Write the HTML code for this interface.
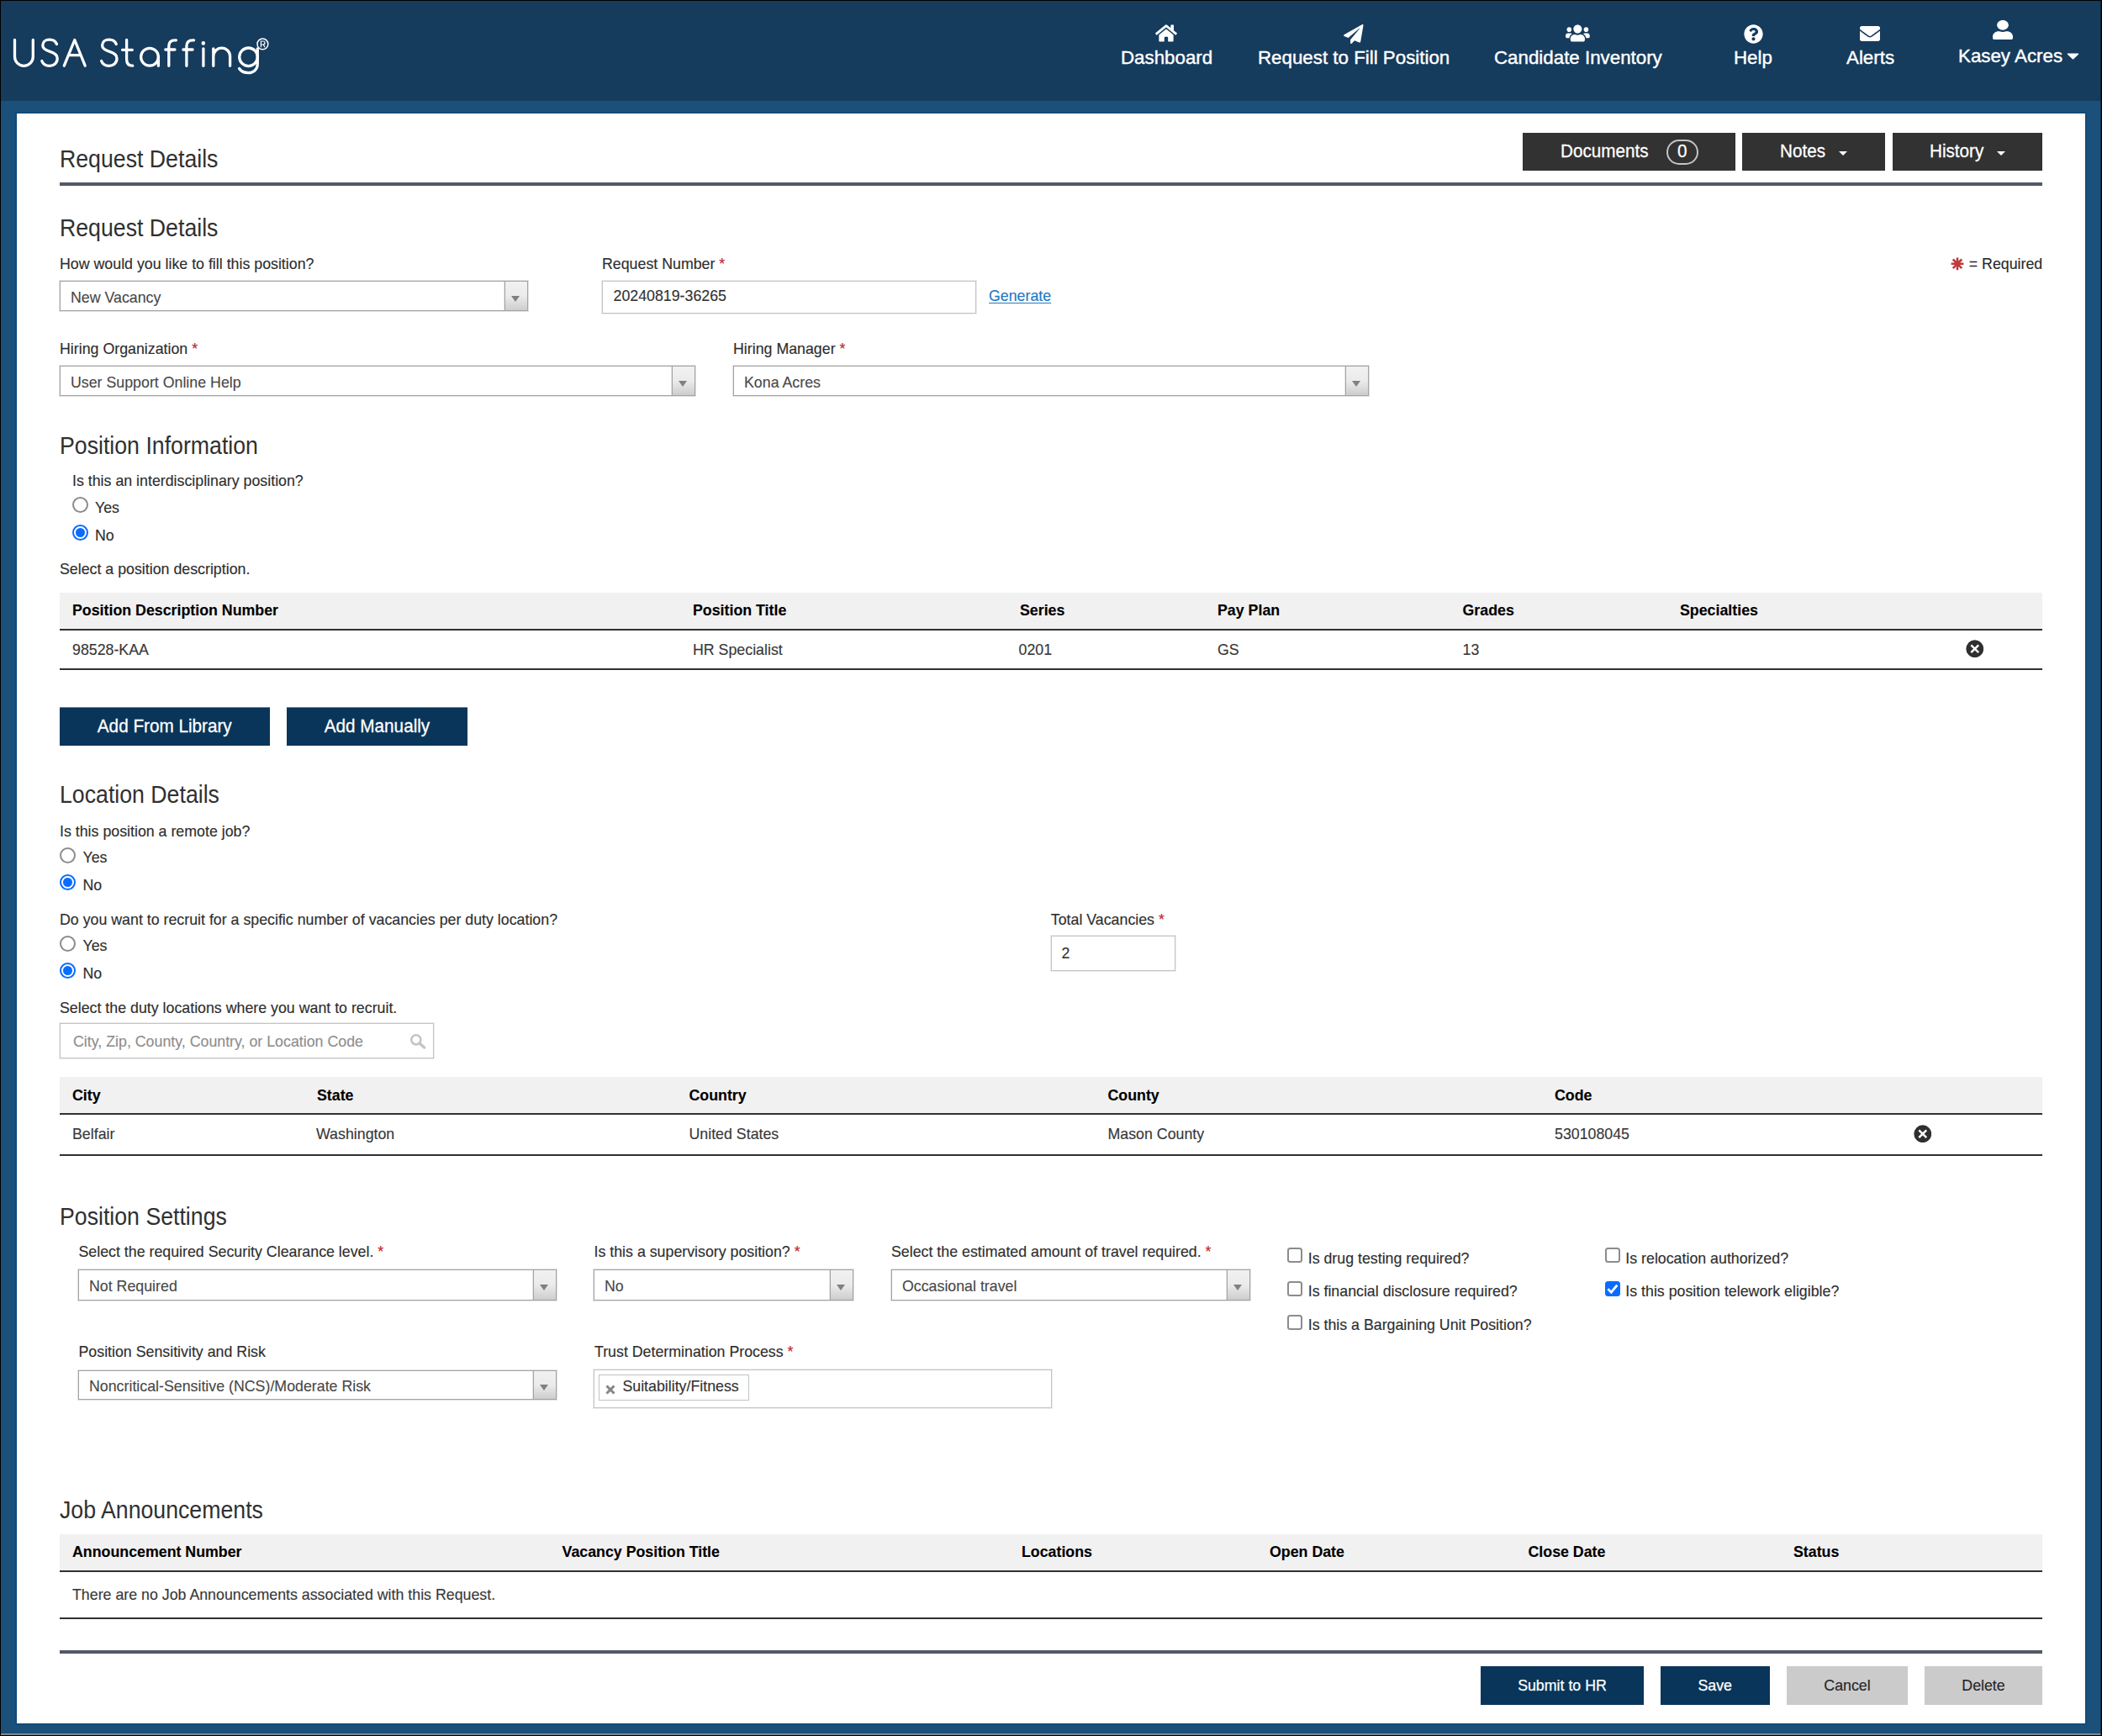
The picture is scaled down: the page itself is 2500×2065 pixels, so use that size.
<!DOCTYPE html>
<html><head><meta charset="utf-8"><title>Request Details</title>
<style>
html,body{margin:0;padding:0}
body{width:2500px;height:2065px;position:relative;overflow:hidden;background:#1b507a;font-family:"Liberation Sans",sans-serif}
.b{position:absolute;box-sizing:border-box}
.t{position:absolute;white-space:nowrap;line-height:1;letter-spacing:0;-webkit-text-stroke:0.14px currentColor}
.sel{position:absolute;box-sizing:border-box;border:1px solid #a3a3a3;background:#fff;box-shadow:0 0 0 1px rgba(150,150,150,.28)}
.selt{position:absolute;left:12px;top:50%;margin-top:-6.4px;font-size:17.8px;line-height:1;color:#484848;white-space:nowrap;-webkit-text-stroke:0.12px #484848}
.arr{position:absolute;right:0;top:0;bottom:0;width:26px;border-left:1px solid #a3a3a3;box-shadow:-1px 0 0 rgba(150,150,150,.25);background:linear-gradient(#f1f1f1 0%,#ebebeb 50%,#cdcdcd 100%)}
.arr i{position:absolute;left:50%;top:50%;margin-left:-6.5px;margin-top:-0.2px;width:0;height:0;border-left:5.2px solid transparent;border-right:5.2px solid transparent;border-top:7.4px solid #808080}
.inp{position:absolute;box-sizing:border-box;border:1px solid #c4c4c4;background:#fff;box-shadow:0 0 0 1px rgba(200,200,200,.35)}
.rad{position:absolute;box-sizing:border-box;width:19px;height:19px;border-radius:50%;border:2px solid #8c8c8c;background:#fff}
.rad.on{border:2.2px solid #0a6cff}
.rad.on:after{content:"";position:absolute;left:50%;top:50%;width:11px;height:11px;margin:-5.5px 0 0 -5.5px;border-radius:50%;background:#0a6cff}
.chk{position:absolute;box-sizing:border-box;width:18px;height:18px;border-radius:3.5px;border:2px solid #8c8c8c;background:#fff}
.chk.on{border:0;background:#0a6cff}
.chk.on svg{position:absolute;left:0;top:0}
.btn{position:absolute;box-sizing:border-box;text-align:center;white-space:nowrap}
</style></head><body>

<div class="b" style="left:0.00px;top:0.00px;width:2500.00px;height:120.00px;background:#153b5d"></div>
<div class="b" style="left:20.00px;top:135.00px;width:2460.00px;height:1915.00px;background:#fff;box-shadow:0 0 0 1.4px #0e4777"></div>
<div class="b" style="left:0.00px;top:2062.00px;width:2500.00px;height:2.00px;background:linear-gradient(#8da0b3,#6f6f6f)"></div>
<div class="b" style="left:0.00px;top:0.00px;width:2500.00px;height:1.00px;background:#000"></div>
<div class="b" style="left:0.00px;top:0.00px;width:1.00px;height:2065.00px;background:#000"></div>
<div class="b" style="left:2499.00px;top:0.00px;width:1.00px;height:2065.00px;background:#000"></div>
<div class="b" style="left:2498.00px;top:0.00px;width:1.00px;height:2065.00px;background:rgba(0,0,0,.45)"></div>
<div class="b" style="left:0.00px;top:2064.00px;width:2500.00px;height:1.00px;background:#000"></div>
<svg class="b" style="left:0;top:0" width="340" height="100" viewBox="0 0 340 100" fill="none" stroke="#fff" stroke-width="3.3" stroke-linecap="round" stroke-linejoin="round">
<path d="M17.5,47.5 V67.4 A10.9,10.9 0 0 0 39.3,67.4 V47.5"/>
<path d="M67.5,52.5 C66,49 63,47.2 59,47.2 C54,47.2 50.8,50 50.8,54 C50.8,58.5 55,60 59.5,61.3 C64.5,62.8 68.2,64.8 68.2,69.5 C68.2,75 64,78.3 59,78.3 C54.5,78.3 51,76 49.8,72.5"/>
<path d="M76.3,78.2 L88.8,47.5 L101.2,78.2 M82,65.6 H95.5"/>
<path transform="translate(70.8,0)" d="M67.5,52.5 C66,49 63,47.2 59,47.2 C54,47.2 50.8,50 50.8,54 C50.8,58.5 55,60 59.5,61.3 C64.5,62.8 68.2,64.8 68.2,69.5 C68.2,75 64,78.3 59,78.3 C54.5,78.3 51,76 49.8,72.5"/>
<path d="M150.6,47.5 V70.5 Q150.6,78.2 157.8,78.2 M145.5,59.3 H157.3"/>
<circle cx="178" cy="67.8" r="10.4"/><path d="M188.4,67.8 V78.3"/>
<path d="M209.5,47.8 H208 Q200.8,47.8 200.8,55 V78.3 M196.8,59 H208"/>
<path transform="translate(21.1,0)" d="M209.5,47.8 H208 Q200.8,47.8 200.8,55 V78.3 M196.8,59 H208"/>
<path d="M241.9,57.8 V78.3"/><circle cx="241.8" cy="51.4" r="1.1" fill="#fff" stroke-width="2.4"/>
<path d="M253.8,57.8 V78.3 M253.8,67 A9.9,9.9 0 0 1 273.6,67 V78.3"/>
<circle cx="295.5" cy="67.8" r="10.8"/><path d="M306.3,57.8 V76 C306.3,83 301,86.6 295.5,86.6 C290.5,86.6 286.5,84.5 284.5,81.5"/>
<circle cx="312.4" cy="52.4" r="6.4" stroke-width="1.5"/>
<path d="M310.4,55.8 V49 H313 A2,2 0 0 1 313,53 H310.4 M313,53 L315,55.8" stroke-width="1.2"/>
</svg>
<div class="t " style="left:1333.00px;top:57.55px;font-size:22.5px;color:#fff;-webkit-text-stroke:0.4px #fff;transform:scaleX(0.992);transform-origin:0 0;">Dashboard</div>
<div class="t " style="left:1495.60px;top:57.55px;font-size:22.5px;color:#fff;-webkit-text-stroke:0.4px #fff;transform:scaleX(0.992);transform-origin:0 0;">Request to Fill Position</div>
<div class="t " style="left:1777.00px;top:57.55px;font-size:22.5px;color:#fff;-webkit-text-stroke:0.4px #fff;transform:scaleX(0.992);transform-origin:0 0;">Candidate Inventory</div>
<div class="t " style="left:2062.40px;top:57.55px;font-size:22.5px;color:#fff;-webkit-text-stroke:0.4px #fff;transform:scaleX(0.992);transform-origin:0 0;">Help</div>
<div class="t " style="left:2196.00px;top:57.55px;font-size:22.5px;color:#fff;-webkit-text-stroke:0.4px #fff;transform:scaleX(0.992);transform-origin:0 0;">Alerts</div>
<div class="t " style="left:2329.00px;top:56.45px;font-size:22.5px;color:#fff;-webkit-text-stroke:0.4px #fff;transform:scaleX(0.992);transform-origin:0 0;">Kasey Acres</div>
<svg class="b" style="left:1374px;top:28.2px" width="26" height="23" viewBox="0 0 576 512" preserveAspectRatio="xMidYMid meet"><path fill="#fff" d="M280.37 148.26L96 300.11V464a16 16 0 0 0 16 16l112.06-.29a16 16 0 0 0 15.92-16V368a16 16 0 0 1 16-16h64a16 16 0 0 1 16 16v95.64a16 16 0 0 0 16 16.05L464 480a16 16 0 0 0 16-16V300L295.67 148.26a12.19 12.19 0 0 0-15.3 0zM571.6 251.47L488 182.56V44.05a12 12 0 0 0-12-12h-56a12 12 0 0 0-12 12v72.61L318.47 43a48 48 0 0 0-61 0L4.34 251.47a12 12 0 0 0-1.6 16.9l25.5 31A12 12 0 0 0 45.15 301l235.22-193.74a12.19 12.19 0 0 1 15.3 0L530.9 301a12 12 0 0 0 16.9-1.6l25.5-31a12 12 0 0 0-1.7-16.93z"/></svg>
<svg class="b" style="left:1598px;top:28.6px" width="23.5" height="23" viewBox="0 0 512 512" preserveAspectRatio="none"><path fill="#fff" d="M476 3.2L12.5 270.6c-18.1 10.4-15.8 35.6 2.2 43.2L121 358.4l287.3-253.2c5.5-4.9 13.3 2.6 8.6 8.3L176 407v80.5c0 23.6 28.5 32.9 42.5 15.8L282 426l124.6 52.2c14.2 6 30.4-2.9 33-18.2l72-432C515 7.8 493.3-6.8 476 3.2z"/></svg>
<svg class="b" style="left:1862px;top:28.2px" width="28.75" height="23" viewBox="0 0 640 512" preserveAspectRatio="xMidYMid meet"><path fill="#fff" d="M96 224c35.3 0 64-28.7 64-64s-28.7-64-64-64-64 28.7-64 64 28.7 64 64 64zm448 0c35.3 0 64-28.7 64-64s-28.7-64-64-64-64 28.7-64 64 28.7 64 64 64zm32 32h-64c-17.6 0-33.500 7.100-45.100 18.600 40.300 22.100 68.900 62 75.100 109.400h66c17.700 0 32-14.300 32-32v-32c0-35.300-28.700-64-64-64zm-256 0c61.900 0 112-50.100 112-112S381.900 32 320 32 208 82.100 208 144s50.100 112 112 112zm76.800 32h-8.300c-20.800 10-43.900 16-68.500 16s-47.600-6-68.500-16h-8.300C179.600 288 128 339.600 128 403.200V432c0 26.500 21.500 48 48 48h288c26.500 0 48-21.500 48-48v-28.800c0-63.600-51.600-115.200-115.200-115.200zm-223.700-13.400C161.500 263.100 145.600 256 128 256H64c-35.300 0-64 28.700-64 64v32c0 17.700 14.300 32 32 32h65.900c6.300-47.400 34.900-87.300 75.200-109.400z"/></svg>
<svg class="b" style="left:2073.5px;top:28.6px" width="23" height="23" viewBox="0 0 512 512" preserveAspectRatio="xMidYMid meet"><path fill="#fff" d="M504 256c0 136.997-111.043 248-248 248S8 392.997 8 256C8 119.083 119.043 8 256 8s248 111.083 248 248zM262.655 90c-54.497 0-89.255 22.957-116.549 63.758-3.536 5.286-2.353 12.415 2.715 16.258l34.699 26.31c5.205 3.947 12.621 3.008 16.665-2.122 17.864-22.658 30.113-35.797 57.303-35.797 20.429 0 45.698 13.148 45.698 32.958 0 14.976-12.363 22.667-32.534 33.976C247.128 238.528 216 254.941 216 296v4c0 6.627 5.373 12 12 12h56c6.627 0 12-5.373 12-12v-1.333c0-28.462 83.186-29.647 83.186-106.667 0-58.002-60.165-102-116.531-102zM256 338c-25.365 0-46 20.635-46 46 0 25.364 20.635 46 46 46s46-20.636 46-46c0-25.365-20.635-46-46-46z"/></svg>
<svg class="b" style="left:2212.4px;top:28px" width="24" height="24" viewBox="0 0 512 512" preserveAspectRatio="xMidYMid meet"><path fill="#fff" d="M502.3 190.8c3.9-3.1 9.7-.2 9.7 4.7V400c0 26.5-21.5 48-48 48H48c-26.5 0-48-21.5-48-48V195.6c0-5 5.7-7.800 9.700-4.700 22.400 17.400 52.100 39.500 154.100 113.600 21.100 15.400 56.700 47.800 92.200 47.600 35.700.3 72-32.800 92.300-47.600 102-74.100 131.600-96.300 154-113.700zM256 320c23.200.4 56.600-29.200 73.400-41.400 132.700-96.300 142.800-104.700 173.400-128.700 5.800-4.500 9.200-11.500 9.200-18.900v-19c0-26.500-21.500-48-48-48H48C21.500 64 0 85.500 0 112v19c0 7.400 3.400 14.300 9.200 18.900 30.600 23.900 40.700 32.400 173.400 128.700 16.800 12.200 50.200 41.800 73.400 41.400z"/></svg>
<svg class="b" style="left:2370px;top:23.6px" width="24" height="23.4" viewBox="0 0 448 512" preserveAspectRatio="none"><path fill="#fff" d="M224 256c70.7 0 128-57.3 128-128S294.7 0 224 0 96 57.3 96 128s57.3 128 128 128zm89.600 32h-16.700c-22.200 10.200-46.900 16-72.900 16s-50.600-5.800-72.900-16h-16.700C60.200 288 0 348.200 0 422.400V464c0 26.500 21.500 48 48 48h352c26.500 0 48-21.500 48-48v-41.600c0-74.200-60.200-134.400-134.400-134.400z"/></svg>
<svg class="b" style="left:2458.4px;top:63.4px" width="15" height="8" viewBox="0 0 15 8"><path d="M1.2,0.6 H13.8 Q14.6,0.9 14,1.7 L8.2,7.3 Q7.5,7.8 6.8,7.3 L1,1.7 Q0.4,0.9 1.2,0.6 Z" fill="#fff"/></svg>
<div class="t" style="left:71px;top:174.82px;font-size:28.8px;color:#303030;-webkit-text-stroke:0;transform:scaleX(0.927);transform-origin:0 0">Request Details</div>
<div class="b" style="left:71.00px;top:217.00px;width:2358.00px;height:4.00px;background:#525966"></div>
<div class="btn" style="left:1811px;top:158px;width:253px;height:45px;background:#323232"></div>
<div class="btn" style="left:2072px;top:158px;width:170px;height:45px;background:#323232"></div>
<div class="btn" style="left:2251px;top:158px;width:178px;height:45px;background:#323232"></div>
<div class="t " style="left:1856.00px;top:169.25px;font-size:22.149px;color:#fff;-webkit-text-stroke:0.3px #fff;transform:scaleX(0.9346);transform-origin:0 0;">Documents</div>
<div class="b" style="left:1981.50px;top:165.50px;width:38.00px;height:30.50px;border:2px solid #c4c4c4;border-radius:15.5px"></div>
<div class="t " style="left:1994.60px;top:169.25px;font-size:22.149px;color:#fff;-webkit-text-stroke:0.3px #fff;transform:scaleX(0.9346);transform-origin:0 0;">0</div>
<div class="t " style="left:2117.30px;top:169.25px;font-size:22.149px;color:#fff;-webkit-text-stroke:0.3px #fff;transform:scaleX(0.9346);transform-origin:0 0;">Notes</div>
<div class="t " style="left:2295.00px;top:169.25px;font-size:22.149px;color:#fff;-webkit-text-stroke:0.3px #fff;transform:scaleX(0.9346);transform-origin:0 0;">History</div>
<div class="b" style="left:2186.7px;top:180px;width:0;height:0;border-left:5.0px solid transparent;border-right:5.0px solid transparent;border-top:5px solid #fff"></div>
<div class="b" style="left:2375px;top:180px;width:0;height:0;border-left:5.0px solid transparent;border-right:5.0px solid transparent;border-top:5px solid #fff"></div>
<div class="t" style="left:71px;top:256.82px;font-size:28.8px;color:#303030;-webkit-text-stroke:0;transform:scaleX(0.927);transform-origin:0 0">Request Details</div>
<div class="t " style="left:71.00px;top:305.53px;font-size:17.8px;color:#2e2e2e;">How would you like to fill this position?</div>
<div class="t " style="left:716.00px;top:305.53px;font-size:17.8px;color:#2e2e2e;">Request Number <span style="color:#c0262c">*</span></div>
<div class="sel" style="left:71.00px;top:334.00px;width:557.00px;height:36.00px"><span class="selt">New Vacancy</span><span class="arr"><i></i></span></div>
<div class="inp" style="left:716px;top:333.5px;width:444.5px;height:39px"></div>
<div class="t " style="left:729.50px;top:344.23px;font-size:17.8px;color:#333;">20240819-36265</div>
<div class="t " style="left:1176.00px;top:343.53px;font-size:17.8px;color:#2279c3;text-decoration:underline;text-decoration-thickness:1.3px;text-underline-offset:2px">Generate</div>
<svg class="b" style="left:2320px;top:306px" width="16" height="15.6" viewBox="-8 -8 16 16"><g stroke="#bf3a3c" stroke-width="2.7" stroke-linecap="butt"><path d="M0,-7.6V7.6M-7.6,0H7.6M-5.4,-5.4L5.4,5.4M-5.4,5.4L5.4,-5.4"/></g></svg>
<div class="t " style="right:70.80px;top:305.53px;font-size:17.8px;color:#2a2a2a;">= Required</div>
<div class="t " style="left:71.00px;top:406.53px;font-size:17.8px;color:#2e2e2e;">Hiring Organization <span style="color:#c0262c">*</span></div>
<div class="t " style="left:872.00px;top:406.53px;font-size:17.8px;color:#2e2e2e;">Hiring Manager <span style="color:#c0262c">*</span></div>
<div class="sel" style="left:71.00px;top:435.00px;width:756.00px;height:36.00px"><span class="selt">User Support Online Help</span><span class="arr"><i></i></span></div>
<div class="sel" style="left:872.00px;top:435.00px;width:756.00px;height:36.00px"><span class="selt">Kona Acres</span><span class="arr"><i></i></span></div>
<div class="t" style="left:71px;top:515.62px;font-size:28.8px;color:#303030;-webkit-text-stroke:0;transform:scaleX(0.927);transform-origin:0 0">Position Information</div>
<div class="t " style="left:86.00px;top:563.53px;font-size:17.8px;color:#2e2e2e;">Is this an interdisciplinary position?</div>
<div class="rad" style="left:85.50px;top:590.90px"></div>
<div class="t " style="left:113.00px;top:595.53px;font-size:17.8px;color:#2e2e2e;">Yes</div>
<div class="rad on" style="left:85.50px;top:624.20px"></div>
<div class="t " style="left:113.00px;top:628.53px;font-size:17.8px;color:#2e2e2e;">No</div>
<div class="t " style="left:71.00px;top:668.53px;font-size:17.8px;color:#2e2e2e;">Select a position description.</div>
<div class="b" style="left:71.00px;top:705.00px;width:2358.00px;height:44.00px;background:#f1f1f1"></div>
<div class="b" style="left:71.00px;top:748.00px;width:2358.00px;height:2.00px;background:#303030"></div>
<div class="b" style="left:71.00px;top:795.00px;width:2358.00px;height:2.00px;background:#303030"></div>
<div class="t " style="left:86.00px;top:718.43px;font-size:17.8px;color:#000;font-weight:bold;-webkit-text-stroke:0.12px #000;">Position Description Number</div>
<div class="t " style="left:824.00px;top:718.43px;font-size:17.8px;color:#000;font-weight:bold;-webkit-text-stroke:0.12px #000;">Position Title</div>
<div class="t " style="left:1213.00px;top:718.43px;font-size:17.8px;color:#000;font-weight:bold;-webkit-text-stroke:0.12px #000;">Series</div>
<div class="t " style="left:1448.00px;top:718.43px;font-size:17.8px;color:#000;font-weight:bold;-webkit-text-stroke:0.12px #000;">Pay Plan</div>
<div class="t " style="left:1739.50px;top:718.43px;font-size:17.8px;color:#000;font-weight:bold;-webkit-text-stroke:0.12px #000;">Grades</div>
<div class="t " style="left:1998.00px;top:718.43px;font-size:17.8px;color:#000;font-weight:bold;-webkit-text-stroke:0.12px #000;">Specialties</div>
<div class="t " style="left:86.00px;top:764.53px;font-size:17.8px;color:#383838;">98528-KAA</div>
<div class="t " style="left:824.00px;top:764.53px;font-size:17.8px;color:#383838;">HR Specialist</div>
<div class="t " style="left:1211.50px;top:764.53px;font-size:17.8px;color:#383838;">0201</div>
<div class="t " style="left:1448.00px;top:764.53px;font-size:17.8px;color:#383838;">GS</div>
<div class="t " style="left:1739.50px;top:764.53px;font-size:17.8px;color:#383838;">13</div>
<svg class="b" style="left:2337.65px;top:760.55px" width="21.5" height="21.5" viewBox="0 0 512 512"><circle cx="256" cy="256" r="248" fill="#2f2f2f"/><path d="M150 150 L362 362 M362 150 L150 362" stroke="#fff" stroke-width="58" stroke-linecap="butt"/></svg>
<div class="btn" style="left:71px;top:842px;width:249.5px;height:45px;background:#09355a;box-shadow:0 -1px 0 rgba(9,53,90,.6);"><div style="position:absolute;left:0;right:0;top:11.36px;line-height:1;font-size:22.25px;color:#fff;transform:scaleX(0.9302);-webkit-text-stroke:0.3px #fff">Add From Library</div></div>
<div class="btn" style="left:340.5px;top:842px;width:215.0px;height:45px;background:#09355a;box-shadow:0 -1px 0 rgba(9,53,90,.6);"><div style="position:absolute;left:0;right:0;top:11.36px;line-height:1;font-size:22.25px;color:#fff;transform:scaleX(0.9302);-webkit-text-stroke:0.3px #fff">Add Manually</div></div>
<div class="t" style="left:71px;top:931.32px;font-size:28.8px;color:#303030;-webkit-text-stroke:0;transform:scaleX(0.927);transform-origin:0 0">Location Details</div>
<div class="t " style="left:71.00px;top:980.53px;font-size:17.8px;color:#2e2e2e;">Is this position a remote job?</div>
<div class="rad" style="left:71.00px;top:1007.90px"></div>
<div class="t " style="left:98.50px;top:1012.03px;font-size:17.8px;color:#2e2e2e;">Yes</div>
<div class="rad on" style="left:71.00px;top:1040.40px"></div>
<div class="t " style="left:98.50px;top:1044.73px;font-size:17.8px;color:#2e2e2e;">No</div>
<div class="t " style="left:71.00px;top:1085.53px;font-size:17.8px;color:#2e2e2e;">Do you want to recruit for a specific number of vacancies per duty location?</div>
<div class="rad" style="left:71.00px;top:1112.90px"></div>
<div class="t " style="left:98.50px;top:1117.03px;font-size:17.8px;color:#2e2e2e;">Yes</div>
<div class="rad on" style="left:71.00px;top:1145.40px"></div>
<div class="t " style="left:98.50px;top:1149.73px;font-size:17.8px;color:#2e2e2e;">No</div>
<div class="t " style="left:1249.80px;top:1085.53px;font-size:17.8px;color:#2e2e2e;">Total Vacancies <span style="color:#c0262c">*</span></div>
<div class="inp" style="left:1250px;top:1113px;width:148px;height:42px"></div>
<div class="t " style="left:1262.60px;top:1125.53px;font-size:17.8px;color:#333;">2</div>
<div class="t " style="left:71.00px;top:1190.53px;font-size:17.8px;color:#2e2e2e;">Select the duty locations where you want to recruit.</div>
<div class="inp" style="left:71px;top:1217px;width:445px;height:41.5px"></div>
<div class="t " style="left:87.00px;top:1230.53px;font-size:17.8px;color:#8e8e8e;">City, Zip, County, Country, or Location Code</div>
<svg class="b" style="left:487px;top:1229px" width="20" height="19" viewBox="0 0 20 19"><circle cx="7.8" cy="7.8" r="5.6" fill="none" stroke="#c4c4c4" stroke-width="2.6"/><path d="M12,12 L17.6,17" stroke="#c4c4c4" stroke-width="3.4" stroke-linecap="round"/></svg>
<div class="b" style="left:71.00px;top:1281.00px;width:2358.00px;height:44.00px;background:#f1f1f1"></div>
<div class="b" style="left:71.00px;top:1324.00px;width:2358.00px;height:2.00px;background:#303030"></div>
<div class="b" style="left:71.00px;top:1373.00px;width:2358.00px;height:2.00px;background:#303030"></div>
<div class="t " style="left:86.00px;top:1294.53px;font-size:17.8px;color:#000;font-weight:bold;-webkit-text-stroke:0.12px #000;">City</div>
<div class="t " style="left:377.00px;top:1294.53px;font-size:17.8px;color:#000;font-weight:bold;-webkit-text-stroke:0.12px #000;">State</div>
<div class="t " style="left:819.50px;top:1294.53px;font-size:17.8px;color:#000;font-weight:bold;-webkit-text-stroke:0.12px #000;">Country</div>
<div class="t " style="left:1317.50px;top:1294.53px;font-size:17.8px;color:#000;font-weight:bold;-webkit-text-stroke:0.12px #000;">County</div>
<div class="t " style="left:1849.00px;top:1294.53px;font-size:17.8px;color:#000;font-weight:bold;-webkit-text-stroke:0.12px #000;">Code</div>
<div class="t " style="left:86.00px;top:1340.53px;font-size:17.8px;color:#383838;">Belfair</div>
<div class="t " style="left:376.00px;top:1340.53px;font-size:17.8px;color:#383838;">Washington</div>
<div class="t " style="left:819.50px;top:1340.53px;font-size:17.8px;color:#383838;">United States</div>
<div class="t " style="left:1317.50px;top:1340.53px;font-size:17.8px;color:#383838;">Mason County</div>
<div class="t " style="left:1849.00px;top:1340.53px;font-size:17.8px;color:#383838;">530108045</div>
<svg class="b" style="left:2275.75px;top:1337.75px" width="21.5" height="21.5" viewBox="0 0 512 512"><circle cx="256" cy="256" r="248" fill="#2f2f2f"/><path d="M150 150 L362 362 M362 150 L150 362" stroke="#fff" stroke-width="58" stroke-linecap="butt"/></svg>
<div class="t" style="left:71px;top:1433.12px;font-size:28.8px;color:#303030;-webkit-text-stroke:0;transform:scaleX(0.927);transform-origin:0 0">Position Settings</div>
<div class="t " style="left:93.50px;top:1480.53px;font-size:17.8px;color:#2e2e2e;">Select the required Security Clearance level. <span style="color:#c0262c">*</span></div>
<div class="t " style="left:706.50px;top:1480.53px;font-size:17.8px;color:#2e2e2e;">Is this a supervisory position? <span style="color:#c0262c">*</span></div>
<div class="t " style="left:1060.00px;top:1480.53px;font-size:17.8px;color:#2e2e2e;">Select the estimated amount of travel required. <span style="color:#c0262c">*</span></div>
<div class="sel" style="left:93.00px;top:1510.00px;width:569.00px;height:37.00px"><span class="selt">Not Required</span><span class="arr"><i></i></span></div>
<div class="sel" style="left:706.00px;top:1510.00px;width:309.00px;height:37.00px"><span class="selt">No</span><span class="arr"><i></i></span></div>
<div class="sel" style="left:1060.00px;top:1510.00px;width:427.00px;height:37.00px"><span class="selt">Occasional travel</span><span class="arr"><i></i></span></div>
<div class="t " style="left:93.50px;top:1599.83px;font-size:17.8px;color:#2e2e2e;">Position Sensitivity and Risk</div>
<div class="t " style="left:707.00px;top:1599.83px;font-size:17.8px;color:#2e2e2e;">Trust Determination Process <span style="color:#c0262c">*</span></div>
<div class="sel" style="left:93.00px;top:1630.00px;width:569.00px;height:35.00px"><span class="selt">Noncritical-Sensitive (NCS)/Moderate Risk</span><span class="arr"><i></i></span></div>
<div class="inp" style="left:706px;top:1629px;width:545px;height:46px"></div>
<div class="inp" style="left:712px;top:1635px;width:179px;height:31px;border-color:#c2c2c2;box-shadow:none"></div>
<svg class="b" style="left:719.5px;top:1646.7px" width="12" height="12" viewBox="0 0 12 12"><path d="M1.5,1.5 L10.5,10.5 M10.5,1.5 L1.5,10.5" stroke="#858585" stroke-width="3"/></svg>
<div class="t " style="left:740.40px;top:1640.73px;font-size:17.8px;color:#333;">Suitability/Fitness</div>
<div class="chk" style="left:1531.00px;top:1484.00px"></div>
<div class="t " style="left:1555.70px;top:1488.53px;font-size:17.8px;color:#2e2e2e;">Is drug testing required?</div>
<div class="chk" style="left:1531.00px;top:1524.00px"></div>
<div class="t " style="left:1555.70px;top:1528.03px;font-size:17.8px;color:#2e2e2e;">Is financial disclosure required?</div>
<div class="chk" style="left:1531.00px;top:1563.50px"></div>
<div class="t " style="left:1555.70px;top:1567.53px;font-size:17.8px;color:#2e2e2e;">Is this a Bargaining Unit Position?</div>
<div class="chk" style="left:1909.00px;top:1484.00px"></div>
<div class="t " style="left:1933.30px;top:1488.53px;font-size:17.8px;color:#2e2e2e;">Is relocation authorized?</div>
<div class="chk on" style="left:1909.00px;top:1524.00px"><svg viewBox="0 0 18 18" width="18" height="18"><path d="M3.4 9.3 L7.3 13.2 L14.4 4.6" fill="none" stroke="#fff" stroke-width="2.8" stroke-linecap="butt" stroke-linejoin="miter"/></svg></div>
<div class="t " style="left:1933.30px;top:1528.03px;font-size:17.8px;color:#2e2e2e;">Is this position telework eligible?</div>
<div class="t" style="left:71px;top:1781.62px;font-size:28.8px;color:#303030;-webkit-text-stroke:0;transform:scaleX(0.927);transform-origin:0 0">Job Announcements</div>
<div class="b" style="left:71.00px;top:1825.00px;width:2358.00px;height:44.00px;background:#f1f1f1"></div>
<div class="b" style="left:71.00px;top:1868.00px;width:2358.00px;height:2.00px;background:#303030"></div>
<div class="b" style="left:71.00px;top:1923.60px;width:2358.00px;height:2.00px;background:#303030"></div>
<div class="t " style="left:86.00px;top:1838.13px;font-size:17.8px;color:#000;font-weight:bold;-webkit-text-stroke:0.12px #000;">Announcement Number</div>
<div class="t " style="left:668.50px;top:1838.13px;font-size:17.8px;color:#000;font-weight:bold;-webkit-text-stroke:0.12px #000;">Vacancy Position Title</div>
<div class="t " style="left:1215.00px;top:1838.13px;font-size:17.8px;color:#000;font-weight:bold;-webkit-text-stroke:0.12px #000;">Locations</div>
<div class="t " style="left:1510.00px;top:1838.13px;font-size:17.8px;color:#000;font-weight:bold;-webkit-text-stroke:0.12px #000;">Open Date</div>
<div class="t " style="left:1817.50px;top:1838.13px;font-size:17.8px;color:#000;font-weight:bold;-webkit-text-stroke:0.12px #000;">Close Date</div>
<div class="t " style="left:2133.00px;top:1838.13px;font-size:17.8px;color:#000;font-weight:bold;-webkit-text-stroke:0.12px #000;">Status</div>
<div class="t " style="left:86.00px;top:1889.13px;font-size:17.8px;color:#383838;">There are no Job Announcements associated with this Request.</div>
<div class="b" style="left:71.00px;top:1963.00px;width:2358.00px;height:4.00px;background:#525966"></div>
<div class="btn" style="left:1761px;top:1982px;width:194px;height:46px;background:#09355a;"><div style="position:absolute;left:0;right:0;top:14.93px;line-height:1;font-size:17.80px;color:#fff;transform:scaleX(1.0000);-webkit-text-stroke:0.25px #fff">Submit to HR</div></div>
<div class="btn" style="left:1975px;top:1982px;width:129.5px;height:46px;background:#09355a;"><div style="position:absolute;left:0;right:0;top:14.93px;line-height:1;font-size:17.80px;color:#fff;transform:scaleX(1.0000);-webkit-text-stroke:0.25px #fff">Save</div></div>
<div class="btn" style="left:2125px;top:1982px;width:144px;height:46px;background:#cbcbcb;"><div style="position:absolute;left:0;right:0;top:14.93px;line-height:1;font-size:17.80px;color:#262626;transform:scaleX(1.0000);-webkit-text-stroke:0.15px #262626">Cancel</div></div>
<div class="btn" style="left:2289px;top:1982px;width:140px;height:46px;background:#cbcbcb;"><div style="position:absolute;left:0;right:0;top:14.93px;line-height:1;font-size:17.80px;color:#262626;transform:scaleX(1.0000);-webkit-text-stroke:0.15px #262626">Delete</div></div>
</body></html>
